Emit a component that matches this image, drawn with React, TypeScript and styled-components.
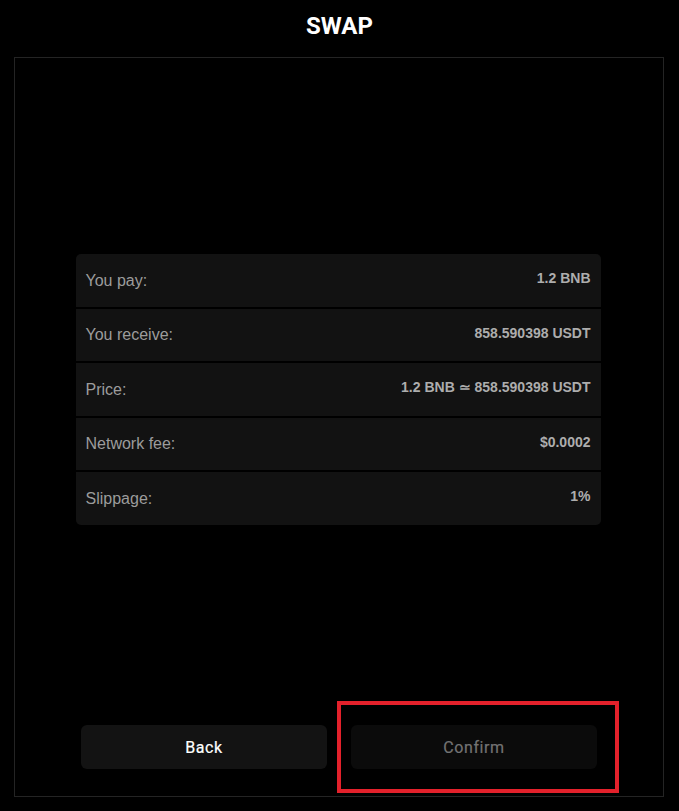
import React from 'react'
import styled, { createGlobalStyle } from 'styled-components'

interface Row {
  label: string
  value: string
}

const rows: Row[] = [
  { label: 'You pay:', value: '1.2 BNB' },
  { label: 'You receive:', value: '858.590398 USDT' },
  { label: 'Price:', value: '1.2 BNB ≃ 858.590398 USDT' },
  { label: 'Network fee:', value: '$0.0002' },
  { label: 'Slippage:', value: '1%' },
]

const GlobalStyle = createGlobalStyle`
  html, body {
    margin: 0;
    padding: 0;
    background: #000;
  }
  body {
    font-family: "Liberation Sans", Arial, sans-serif;
  }
`

export default function App() {
  return (
    <Page>
      <GlobalStyle />
      <Title>SWAP</Title>
      <Panel>
        <Summary>
          <Table>
            {rows.map((row) => (
              <TableRow key={row.label}>
                <Label>{row.label}</Label>
                <Value>{row.value}</Value>
              </TableRow>
            ))}
          </Table>
        </Summary>
        <Actions>
          <Button>Back</Button>
          <Highlight>
            <Button disabled>Confirm</Button>
          </Highlight>
        </Actions>
      </Panel>
    </Page>
  )
}

const Page = styled.div`
  width: 679px;
  height: 811px;
  background: #000;
  display: flex;
  flex-direction: column;
  align-items: center;
  box-sizing: border-box;
`

const Title = styled.h1`
  margin: 12px 0 17px;
  font-family: Roboto, "Liberation Sans", sans-serif;
  font-size: 24px;
  font-weight: 700;
  line-height: 28px;
  color: #fff;
`

const Panel = styled.div`
  width: 650px;
  height: 740px;
  margin-left: -1px;
  box-sizing: border-box;
  border: 1px solid #242424;
  display: flex;
  flex-direction: column;
`

const Summary = styled.div`
  flex: 1;
  display: flex;
  align-items: center;
  justify-content: center;
  padding: 0 2px 4px 0;
`

const Table = styled.div`
  width: 525px;
  display: flex;
  flex-direction: column;
  gap: 2px;
  border-radius: 5px;
  overflow: hidden;
`

const TableRow = styled.div`
  height: 52.6px;
  box-sizing: border-box;
  padding: 16px 10px 0;
  background: #121212;
  display: flex;
  justify-content: space-between;
  align-items: flex-start;
`

const Label = styled.span`
  font-size: 16px;
  color: #9c9c9c;
  padding-top: 1.5px;
`

const Value = styled.span`
  font-size: 14px;
  font-weight: 700;
  color: #adadad;
`

const Actions = styled.div`
  display: flex;
  justify-content: center;
  gap: 24px;
  padding: 0 0 27px;
`

const Highlight = styled.div`
  position: relative;
  &::after {
    content: '';
    position: absolute;
    left: -14px;
    right: -22px;
    top: -24px;
    bottom: -24px;
    border: 4px solid #e3212b;
    pointer-events: none;
  }
`

const Button = styled.button`
  width: 246px;
  height: 44px;
  border: none;
  border-radius: 6px;
  background: #131313;
  color: #fff;
  font-family: Roboto, "Liberation Sans", sans-serif;
  font-size: 16px;
  font-weight: 400;
  letter-spacing: 0.6px;
  -webkit-text-stroke: 0.2px currentColor;
  cursor: pointer;
  &:disabled {
    background: #0b0b0b;
    color: #737373;
    cursor: default;
  }
`
